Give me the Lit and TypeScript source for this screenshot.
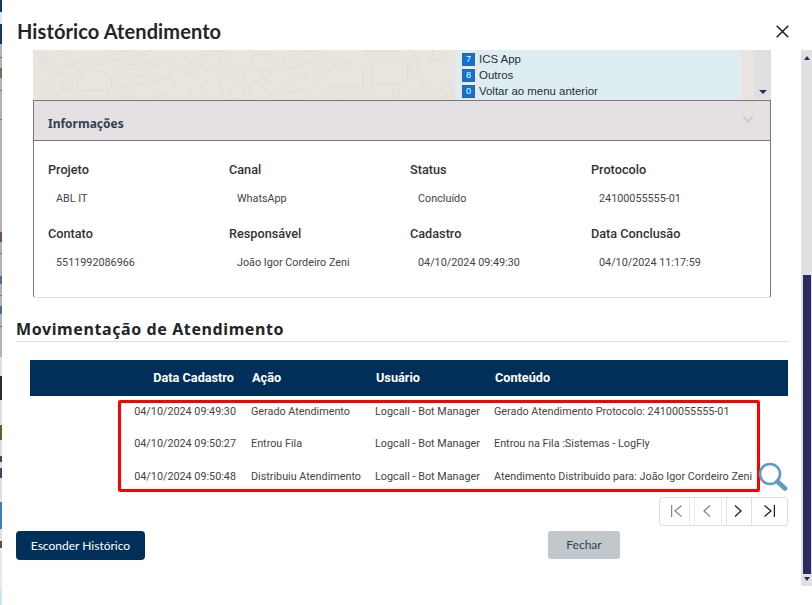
import { LitElement, html, css, svg } from "lit";
import { customElement } from "lit/decorators.js";

const FIELDS = [
  ["Projeto", "ABL IT"],
  ["Canal", "WhatsApp"],
  ["Status", "Concluído"],
  ["Protocolo", "24100055555-01"],
  ["Contato", "5511992086966"],
  ["Responsável", "João Igor Cordeiro Zeni"],
  ["Cadastro", "04/10/2024 09:49:30"],
  ["Data Conclusão", "04/10/2024 11:17:59"],
];

const ROWS = [
  ["04/10/2024 09:49:30", "Gerado Atendimento", "Logcall - Bot Manager", "Gerado Atendimento Protocolo: 24100055555-01"],
  ["04/10/2024 09:50:27", "Entrou Fila", "Logcall - Bot Manager", "Entrou na Fila :Sistemas - LogFly"],
  ["04/10/2024 09:50:48", "Distribuiu Atendimento", "Logcall - Bot Manager", "Atendimento Distribuido para: João Igor Cordeiro Zeni"],
];

const MENU = [
  ["7", "ICS App"],
  ["8", "Outros"],
  ["0", "Voltar ao menu anterior"],
];

const star = (x: number, y: number, r = 1) =>
  svg`<path transform="translate(${x} ${y}) scale(${r})" d="M0-7l2.2 4.6 5 .7-3.6 3.6.9 5L0 4.5-4.5 6.900l.9-5L-7.200-1.700l5-.7z"/>`;
const spark = (x: number, y: number) =>
  svg`<path transform="translate(${x} ${y})" d="M0-8l2 6 6 2-6 2-2 6-2-6-6-2 6-2z"/>`;
const cloud = (x: number, y: number, s = 1) =>
  svg`<path transform="translate(${x} ${y}) scale(${s})" d="M-10 9a6 6 0 0 1-2-11 7 7 0 0 1 10-5 8 8 0 0 1 12 4 6.500 6.500 0 0 1 0 12z"/>`;
const dots: number[][] = [
  [92, 47], [100, 47], [122, 47], [141, 34], [157, 41], [170, 37], [40, 15], [112, 5], [172, 6], [197, 14],
  [255, 32], [263, 27], [273, 27], [296, 8], [400, 10], [427, 24],
];

const doodles = svg`
  <g fill="none" stroke="#e4dfd8" stroke-width="1.5">
    <circle cx="22" cy="8" r="15"/><circle cx="22" cy="8" r="11"/><path d="M26 0l-8 16"/>
    <path d="M47 13l4-6 8 3 50-13 8 4-64 17z"/>
    <path d="M80 18l52-8 7 6-3 5 2 6-47 11-7-4 1-8z"/><path d="M91 21l36-6M92 28l33-6"/>
    ${star(157, 18)}
    ${cloud(62, 30, 1.2)}
    ${star(34, 35, 0.9)}
    <circle cx="180" cy="8" r="13"/><circle cx="180" cy="8" r="8"/>
    <path d="M184 27l26-6 8 29h-26z"/><circle cx="204" cy="42" r="7"/>
    <path d="M2 44l11-9a3 3 0 0 1 5 4l-9 9"/>
    <path d="M82 50l5-7 4 7"/>
    ${dots.map(([x, y]) => svg`<circle cx="${x}" cy="${y}" r="2"/>`)}
    <path d="M127 48c1-5 7-5 9-2s5 2 5 4"/>
    ${cloud(230, 12)}
    <path d="M250 8l36-9 4 10-36 10z"/><path d="M262 6l3 11"/>
    <path d="M304 18c-3-3-2-7 1-7s3 4 0 5M314 18c-3-3-2-7 1-7s3 4 0 5"/>
    <path d="M285 31V21l8-2v9"/><circle cx="283" cy="31" r="2"/><circle cx="291" cy="28" r="2"/>
    ${spark(229, 31)}
    <path d="M237 44l10-5 12 3 10-3 8 5-6 6h-30z"/>
    <rect x="295" y="37" width="30" height="18" rx="4"/><circle cx="310" cy="45" r="5"/>
    <rect x="330" y="15" width="9" height="26" rx="4"/>
    <rect x="340" y="8" width="34" height="27" rx="3"/>
    <path d="M330 1h37"/>
    <rect x="377" y="5" width="8" height="23" rx="4"/>
    <path d="M360 38v12M365 38v12"/>
    ${spark(390, 41)}
    <path d="M404 48c2-3 3-8 5-12s7-5 9 0 1 9 2 12z"/>
    <path d="M400 0l12 8-14 4z"/>
    ${cloud(738, 18, 0.7)}
    <path d="M724 34l3 5 6 1-4 4 1 6"/>
  </g>
`;

@customElement("app-root")
export class AppRoot extends LitElement {
  static styles = css`
    :host {
      display: flex;
      width: 812px;
      height: 605px;
      overflow: hidden;
      background: #fff;
      font-family: Roboto, sans-serif;
      color: #333;
    }
    .backdrop {
      flex: 0 0 2px;
      background: linear-gradient(
        to bottom,
        #0d3c66 0 12px,
        #dfe6ec 12px 24px,
        #0d3c66 24px 44px,
        #b2b2b6 44px 57px,
        #777 57px 58px,
        #b2b2b6 58px 68px,
        #7a6a5a 68px 78px,
        #b2b2b6 78px 90px,
        #777 90px 91px,
        #b2b2b6 91px 119px,
        #777 119px 120px,
        #b2b2b6 120px 232px,
        #7a4f45 232px 242px,
        #b2b2b6 242px 253px,
        #777 253px 254px,
        #b2b2b6 254px 276px,
        #4f6e8e 276px 284px,
        #b2b2b6 284px 295px,
        #777 295px 296px,
        #b2b2b6 296px 306px,
        #4f6e8e 306px 314px,
        #b2b2b6 314px 326px,
        #777 326px 327px,
        #b2b2b6 327px 357px,
        #dedede 357px 376px,
        #2a2a2a 376px 400px,
        #dedede 400px 425px,
        #6b5b35 425px 440px,
        #dedede 440px 456px,
        #3b4a5c 456px 462px,
        #dedede 462px 468px,
        #3b4a5c 468px 478px,
        #e0e0e0 478px 502px,
        #3f7fb5 502px 529px,
        #e0e0e0 529px 541px,
        #6b4a35 541px 548px,
        #e8e8e8 548px 590px,
        #cfe5f0 590px 605px
      );
    }
    .modal {
      flex: 1;
      min-width: 0;
      display: flex;
      flex-direction: column;
    }
    .head {
      flex: 0 0 50px;
      display: flex;
      align-items: center;
      justify-content: space-between;
      padding: 12px 23px 0 15px;
      box-sizing: border-box;
    }
    .title {
      margin: 0;
      font: 700 20px/26px Lato, sans-serif;
      letter-spacing: 0.1px;
      color: #212529;
    }
    .close {
      display: block;
      width: 13px;
      height: 13px;
    }
    .main {
      flex: 0 0 536px;
      display: flex;
    }
    .content {
      flex: 1;
      min-width: 0;
      padding: 0 13px 0 14px;
      display: flex;
      flex-direction: column;
    }
    .chat {
      flex: 0 0 50px;
      margin: 0 17px;
      display: flex;
      position: relative;
      overflow: hidden;
      background: #e9e4dd;
      justify-content: flex-end;
    }
    .pattern {
      position: absolute;
      left: 0;
      top: 0;
      width: 738px;
      height: 50px;
    }
    .menu {
      position: relative;
      width: 286px;
      margin-right: 13px;
      box-sizing: border-box;
      padding: 1px 0 0 7px;
      background: #deedf1;
      font: 11.45px/16.2px "Liberation Sans", sans-serif;
      color: #262e38;
    }
    .menu-item {
      display: flex;
      align-items: center;
      gap: 4px;
    }
    .key {
      width: 11px;
      height: 11px;
      background: #0a74d8;
      border: 1px solid #47627c;
      color: #fff;
      font-size: 9px;
      line-height: 11px;
      text-align: center;
    }
    .chat-bar {
      position: relative;
      flex: 0 0 17px;
      background: #e0e0e0;
      display: flex;
      align-items: flex-end;
      justify-content: center;
      padding-bottom: 6px;
      box-sizing: border-box;
    }
    .tri-down {
      width: 0;
      height: 0;
      border-left: 4px solid transparent;
      border-right: 4px solid transparent;
      border-top: 4px solid #2b2b63;
    }
    .panel {
      margin: 0 17px;
      flex: 0 0 198px;
      box-sizing: border-box;
      border: 1px solid #777;
      border-top: 0;
      border-bottom: 1px solid #ddd;
      border-radius: 0 0 3px 3px;
    }
    .panel-head {
      height: 41px;
      box-sizing: border-box;
      background: #e4e0e4;
      border-top: 1px solid #777;
      border-bottom: 1px solid #777;
      display: flex;
      align-items: center;
      justify-content: space-between;
      padding: 6px 16px 0 14px;
      font: 700 12px/16px "Noto Sans", sans-serif;
      color: #33404d;
    }
    .chev {
      display: block;
      width: 12px;
      height: 9px;
      margin-top: -8px;
    }
    .fields {
      display: grid;
      grid-template-columns: repeat(4, 181px);
      grid-auto-rows: 64px;
      padding: 19px 0 0 14px;
    }
    .field-label {
      font-size: 12.7px;
      line-height: 19px;
      font-weight: 500;
      color: #333;
    }
    .field-value {
      margin: 12px 0 0 8px;
      font-size: 10.8px;
      line-height: 15px;
      color: #444;
    }
    .section {
      margin: 21px 0 0 0;
      height: 23px;
      border-bottom: 1px solid #e1e1e1;
      font: 700 16px/21px "Noto Sans", sans-serif;
      letter-spacing: 0.6px;
      color: #212529;
      box-sizing: border-box;
    }
    .table-wrap {
      position: relative;
      margin: 18px 0 0 14px;
      display: flex;
      flex-direction: column;
    }
    .row {
      display: grid;
      grid-template-columns: 221px 124px 119px 1fr;
      align-items: center;
    }
    .thead {
      height: 36px;
      box-sizing: border-box;
      padding-bottom: 2px;
      background: #002f5a;
      color: #fff;
      font-size: 12.7px;
      font-weight: 700;
    }
    .thead span {
      padding-left: 1px;
    }
    .thead span:first-child {
      padding: 0 17px 0 0;
      text-align: right;
    }
    .tbody {
      margin-top: -1px;
    }
    .tbody .row {
      height: 32.5px;
      font-size: 10.8px;
      color: #444;
    }
    .tbody .row span:first-child {
      text-align: right;
      padding-right: 15px;
    }
    .mark {
      position: absolute;
      left: 88px;
      top: 40px;
      width: 642px;
      height: 92px;
      box-sizing: border-box;
      border: 3px solid #f00;
      border-radius: 2px;
    }
    .lens {
      position: absolute;
      right: 0;
      top: 102px;
      width: 30px;
      height: 30px;
    }
    .pager-line {
      display: flex;
      justify-content: flex-end;
      margin-top: 4px;
    }
    .pager {
      display: flex;
      width: 129px;
      height: 29px;
      box-sizing: border-box;
      border: 1px solid #dfdfdf;
      border-radius: 3px;
    }
    .pg {
      display: flex;
      align-items: center;
      justify-content: center;
      box-sizing: border-box;
      height: 100%;
    }
    .pg svg {
      display: block;
    }
    .p1 { width: 30px; padding-left: 4px; border-right: 1px solid #e6e6e6; }
    .p2 { width: 28px; margin-left: 4px; padding-right: 3px; border-left: 1px solid #eee; border-right: 1px solid #eee; }
    .p3 { width: 26px; margin-left: 4px; padding-right: 3px; border-left: 1px solid #dfdfdf; border-right: 1px solid #dfdfdf; }
    .p4 { flex: 1; }
    .actions {
      display: flex;
      margin-top: 5px;
      align-items: flex-start;
    }
    .btn-hide {
      width: 129px;
      height: 29px;
      border: 0;
      border-radius: 4px;
      background: #002f5a;
      color: #fff;
      font: 12px Lato, sans-serif;
      padding: 0;
    }
    .btn-close {
      margin-left: 403px;
      width: 72px;
      height: 28px;
      border: 0;
      border-radius: 3px;
      background: #c1c8cb;
      color: #33404d;
      font: 12px Lato, sans-serif;
      padding: 0;
    }
    .bar {
      flex: 0 0 11px;
      background: #e0e0e0;
      display: flex;
      flex-direction: column;
      align-items: center;
      box-sizing: border-box;
      padding: 6px 0 5px;
    }
    .tri-up {
      width: 0;
      height: 0;
      border-left: 3px solid transparent;
      border-right: 3px solid transparent;
      border-bottom: 4px solid #2b2b63;
    }
    .thumb {
      align-self: flex-end;
      width: 8px;
      height: 299px;
      margin: 215px 1px 0 0;
      background: #2b2b63;
    }
    .bar .tri-down {
      margin-top: auto;
      border-left-width: 3px;
      border-right-width: 3px;
    }
  `;

  render() {
    return html`
      <div class="backdrop"></div>
      <div class="modal">
        <header class="head">
          <h1 class="title">Histórico Atendimento</h1>
          <svg class="close" viewBox="0 0 13 13"><path d="M.7.7l11.6 11.6M12.3.7L.7 12.3" stroke="#212529" stroke-width="1.6" fill="none"/></svg>
        </header>
        <div class="main">
          <div class="content">
            <div class="chat">
              <svg class="pattern" viewBox="0 0 738 50">${doodles}</svg>
              <div class="menu">
                ${MENU.map(([k, t]) => html`<div class="menu-item"><span class="key">${k}</span><span>${t}</span></div>`)}
              </div>
              <div class="chat-bar"><div class="tri-down"></div></div>
            </div>
            <section class="panel">
              <div class="panel-head">
                <span>Informações</span>
                <svg class="chev" viewBox="0 0 12 9"><path d="M1 1.5l5 5 5-5" stroke="#cfcdd1" stroke-width="2.4" fill="none"/></svg>
              </div>
              <div class="fields">
                ${FIELDS.map(([l, v]) => html`<div><div class="field-label">${l}</div><div class="field-value">${v}</div></div>`)}
              </div>
            </section>
            <h2 class="section">Movimentação de Atendimento</h2>
            <div class="table-wrap">
              <div class="row thead"><span>Data Cadastro</span><span>Ação</span><span>Usuário</span><span>Conteúdo</span></div>
              <div class="tbody">
                ${ROWS.map((r) => html`<div class="row">${r.map((c) => html`<span>${c}</span>`)}</div>`)}
              </div>
              <div class="mark"></div>
              <svg class="lens" viewBox="0 0 30 30">
                <circle cx="12" cy="12" r="10" fill="none" stroke="#5b9cc2" stroke-width="2.6"/>
                <path d="M19.5 19.5L27 26.500" stroke="#5b9cc2" stroke-width="4.6" stroke-linecap="round"/>
              </svg>
            </div>
            <div class="pager-line">
              <div class="pager">
                <div class="pg p1"><svg width="11" height="12" viewBox="0 0 11 12"><path d="M.6 0v12M10.500.5L4 6l6.500 5.500" stroke="#888" stroke-width="1.3" fill="none"/></svg></div>
                <div class="pg p2"><svg width="8" height="12" viewBox="0 0 8 12"><path d="M7 .5L1 6l6 5.500" stroke="#888" stroke-width="1.3" fill="none"/></svg></div>
                <div class="pg p3"><svg width="8" height="12" viewBox="0 0 8 12"><path d="M1 .5L7 6l-6 5.500" stroke="#222" stroke-width="1.3" fill="none"/></svg></div>
                <div class="pg p4"><svg width="11" height="12" viewBox="0 0 11 12"><path d="M10.400 0v12M.5.5L7 6l-6.500 5.500" stroke="#222" stroke-width="1.3" fill="none"/></svg></div>
              </div>
            </div>
            <div class="actions">
              <button class="btn-hide">Esconder Histórico</button>
              <button class="btn-close">Fechar</button>
            </div>
          </div>
          <div class="bar"><div class="tri-up"></div><div class="thumb"></div><div class="tri-down"></div></div>
        </div>
      </div>
    `;
  }
}
